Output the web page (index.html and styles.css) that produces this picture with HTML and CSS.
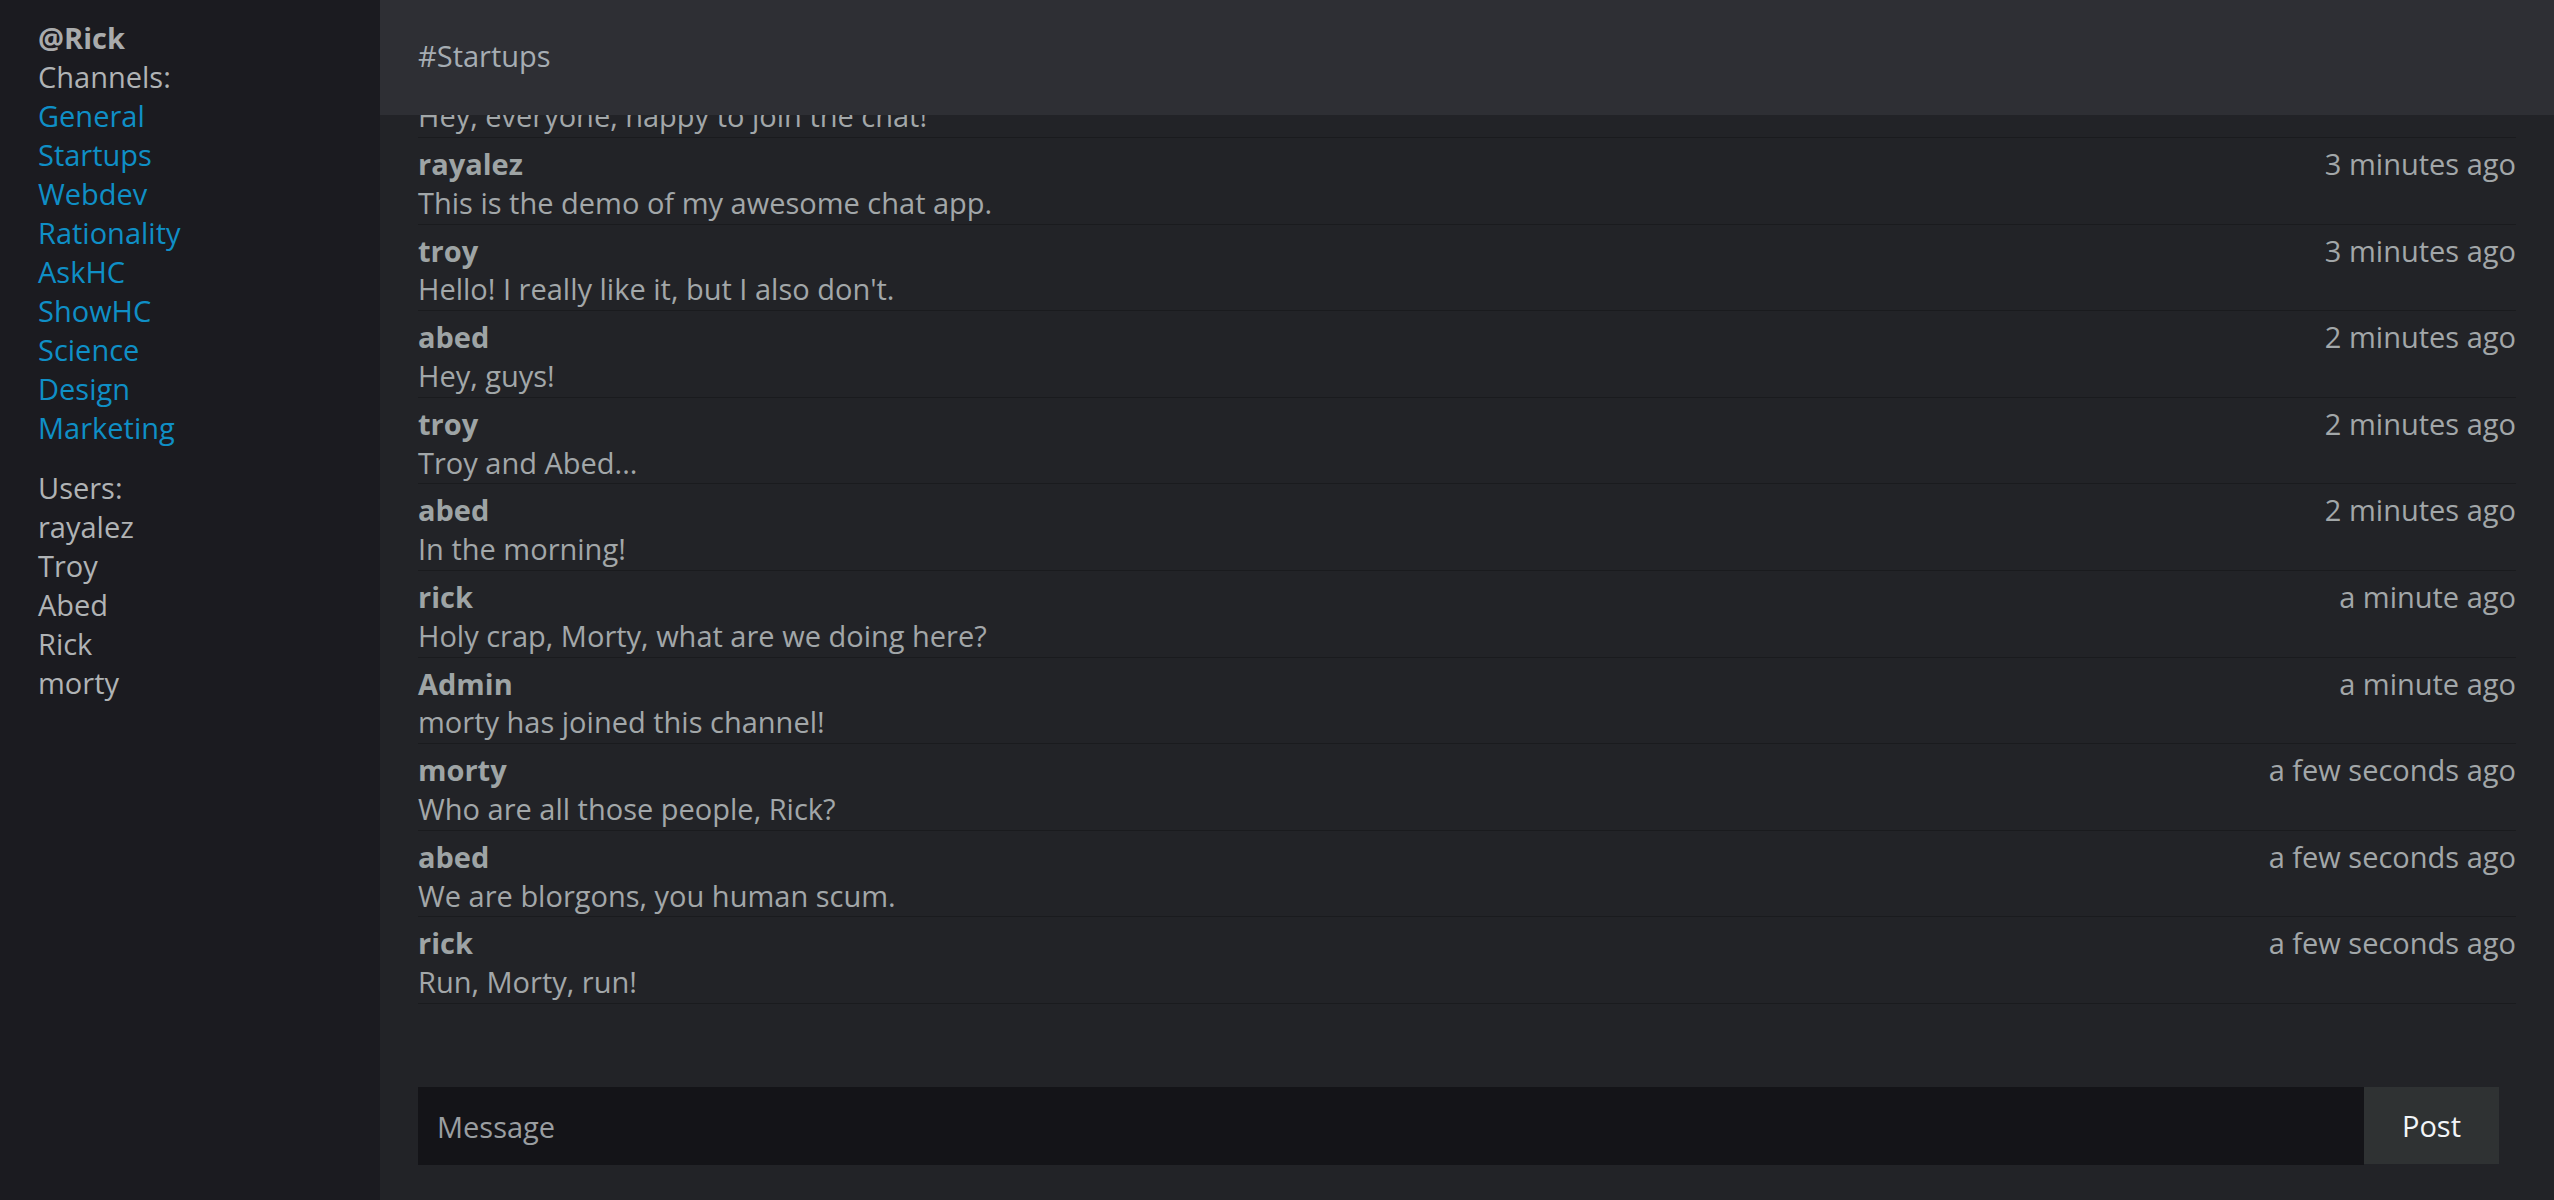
FILE: index.html
```html
<!DOCTYPE html>
<html lang="en">
<head>
<meta charset="utf-8">
<title>Chat - #Startups</title>
<link rel="stylesheet" href="styles.css">
</head>
<body>
<div class="app">
  <aside class="sidebar">
    <div class="me">@Rick</div>
    <div class="label">Channels:</div>
    <ul class="channels">
      <li><a href="#">General</a></li>
      <li><a href="#">Startups</a></li>
      <li><a href="#">Webdev</a></li>
      <li><a href="#">Rationality</a></li>
      <li><a href="#">AskHC</a></li>
      <li><a href="#">ShowHC</a></li>
      <li><a href="#">Science</a></li>
      <li><a href="#">Design</a></li>
      <li><a href="#">Marketing</a></li>
    </ul>
    <div class="label">Users:</div>
    <ul class="users">
      <li>rayalez</li>
      <li>Troy</li>
      <li>Abed</li>
      <li>Rick</li>
      <li>morty</li>
    </ul>
  </aside>
  <main class="chat">
    <header class="chat-header">#Startups</header>
    <div class="messages">
      <div class="message">
        <div class="meta"><span class="author">rayalez</span><span class="time">4 minutes ago</span></div>
        <div class="text">Hey, everyone, happy to join the chat!</div>
      </div>
      <div class="message">
        <div class="meta"><span class="author">rayalez</span><span class="time">3 minutes ago</span></div>
        <div class="text">This is the demo of my awesome chat app.</div>
      </div>
      <div class="message">
        <div class="meta"><span class="author">troy</span><span class="time">3 minutes ago</span></div>
        <div class="text">Hello! I really like it, but I also don't.</div>
      </div>
      <div class="message">
        <div class="meta"><span class="author">abed</span><span class="time">2 minutes ago</span></div>
        <div class="text">Hey, guys!</div>
      </div>
      <div class="message">
        <div class="meta"><span class="author">troy</span><span class="time">2 minutes ago</span></div>
        <div class="text">Troy and Abed...</div>
      </div>
      <div class="message">
        <div class="meta"><span class="author">abed</span><span class="time">2 minutes ago</span></div>
        <div class="text">In the morning!</div>
      </div>
      <div class="message">
        <div class="meta"><span class="author">rick</span><span class="time">a minute ago</span></div>
        <div class="text">Holy crap, Morty, what are we doing here?</div>
      </div>
      <div class="message">
        <div class="meta"><span class="author">Admin</span><span class="time">a minute ago</span></div>
        <div class="text">morty has joined this channel!</div>
      </div>
      <div class="message">
        <div class="meta"><span class="author">morty</span><span class="time">a few seconds ago</span></div>
        <div class="text">Who are all those people, Rick?</div>
      </div>
      <div class="message">
        <div class="meta"><span class="author">abed</span><span class="time">a few seconds ago</span></div>
        <div class="text">We are blorgons, you human scum.</div>
      </div>
      <div class="message">
        <div class="meta"><span class="author">rick</span><span class="time">a few seconds ago</span></div>
        <div class="text">Run, Morty, run!</div>
      </div>
    </div>
    <form class="composer" onsubmit="return false;">
      <input class="composer-input" type="text" placeholder="Message">
      <button class="composer-button" type="submit">Post</button>
    </form>
  </main>
</div>
</body>
</html>
```

FILE: styles.css
```css
html, body {
  margin: 0;
  padding: 0;
  height: 100%;
  overflow: hidden;
}

body {
  font-family: "Open Sans", "Noto Sans", "Liberation Sans", sans-serif;
  font-size: 29px;
  line-height: 39px;
  color: #a2a7a9;
  background: #222327;
}

.app {
  display: flex;
  height: 1200px;
}

/* Sidebar */
.sidebar {
  width: 380px;
  flex: 0 0 380px;
  box-sizing: border-box;
  padding: 18px 38px 0 38px;
  background: #1b1b20;
  color: #b0b3b5;
}

.me {
  font-weight: 700;
  color: #a9abac;
}

.label {
  color: #b0b3b5;
}

.channels,
.users {
  list-style: none;
  margin: 0;
  padding: 0;
}

.channels {
  margin-bottom: 21px;
}

.channels a {
  color: #0f8fc6;
  text-decoration: none;
}

.users li {
  color: #b0b3b5;
}

/* Chat area */
.chat {
  flex: 1 1 auto;
  min-width: 0;
  display: flex;
  flex-direction: column;
  background: #222327;
}

.chat-header {
  flex: 0 0 115px;
  box-sizing: border-box;
  height: 115px;
  padding: 36px 38px 0 38px;
  background: #2e2f34;
  color: #a6adb3;
}

.messages {
  flex: 1 1 auto;
  min-height: 0;
  overflow: hidden;
  display: flex;
  flex-direction: column;
  justify-content: flex-end;
  padding: 0 38px;
}

.message {
  flex: 0 0 auto;
  padding: 7px 0 1px 0;
  border-bottom: 1px solid #1a1b1e;
  line-height: 38.8px;
}

.meta {
  display: flex;
  justify-content: space-between;
  align-items: baseline;
}

.author {
  font-weight: 700;
  color: #9ea4a5;
}

.time {
  color: #a2a7a9;
}

.text {
  color: #a2a7a9;
}

/* Composer */
.composer {
  flex: 0 0 auto;
  display: flex;
  padding: 83px 55px 35px 38px;
  margin: 0;
}

.composer-input {
  flex: 1 1 auto;
  min-width: 0;
  height: 78px;
  box-sizing: border-box;
  margin: 0;
  padding: 0 19px;
  border: none;
  outline: none;
  background: #141418;
  color: #a2a7a9;
  font-family: inherit;
  font-size: 29px;
}

.composer-input::placeholder {
  color: #9a9ea1;
  opacity: 1;
}

.composer-button {
  flex: 0 0 135px;
  width: 135px;
  height: 77px;
  margin: 0;
  padding: 0;
  border: none;
  background: #2f3233;
  color: #f2f5f8;
  font-family: inherit;
  font-size: 29px;
  cursor: pointer;
}
```
